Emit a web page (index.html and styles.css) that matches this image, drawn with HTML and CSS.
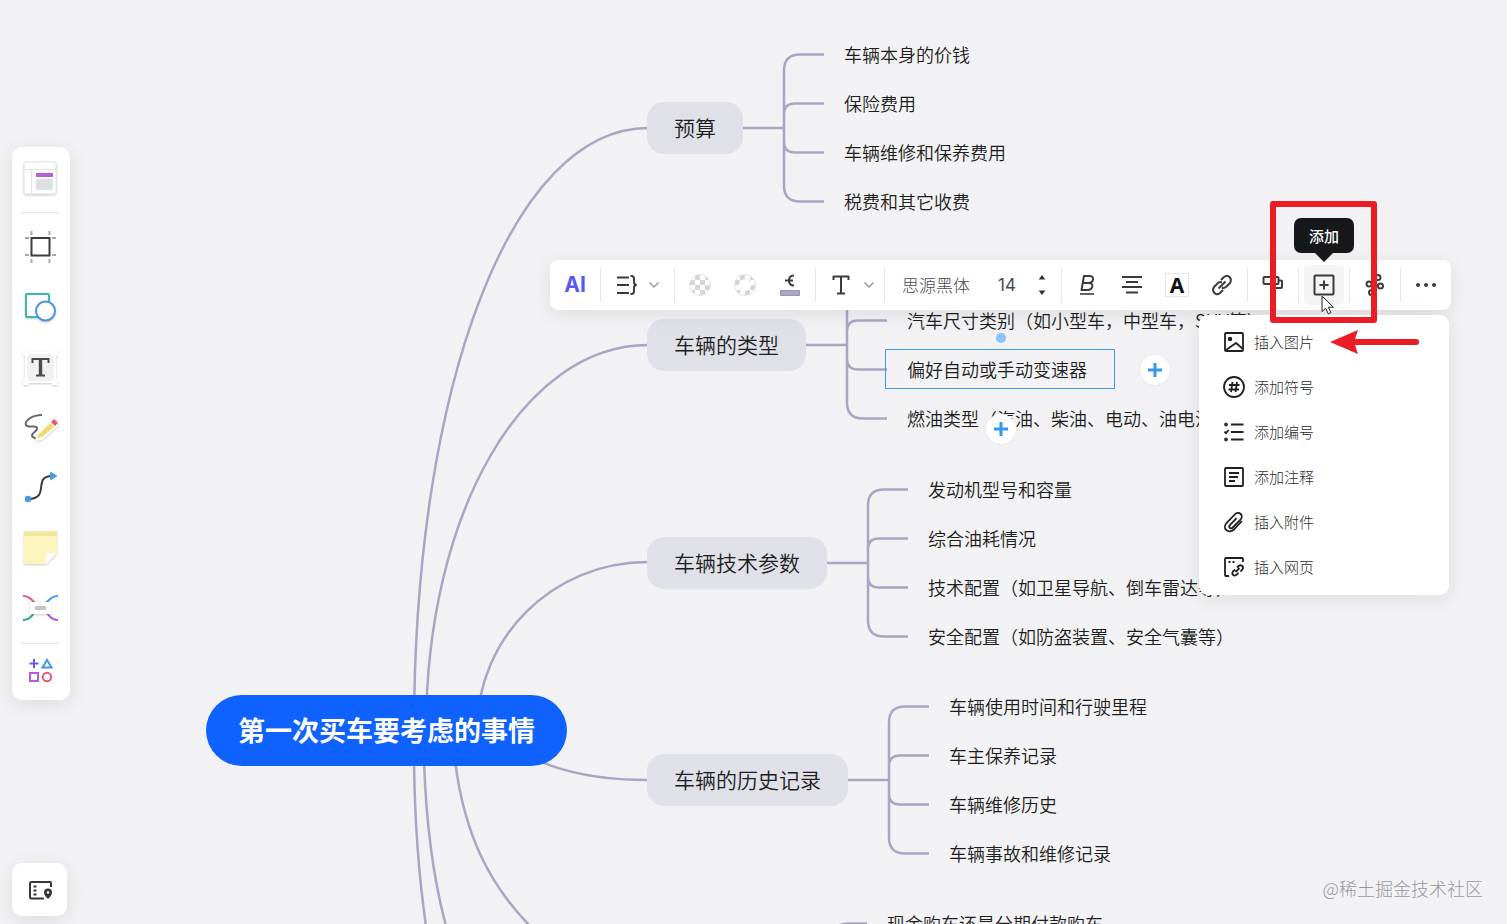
FILE: index.html
```html
<!DOCTYPE html>
<html lang="zh-CN">
<head>
<meta charset="utf-8">
<title>第一次买车要考虑的事情</title>
<meta name="viewport" content="width=device-width, initial-scale=1">
<link rel="stylesheet" href="styles.css">
</head>
<body>
<svg class="defs" aria-hidden="true">
  <defs>
    <symbol id="bracket4" viewBox="0 0 101 196">
      <path d="M0 98H41M81 24.500H57Q41 24.500 41 40.500V155.500Q41 171.500 57 171.500H81M41 86V84Q41 73.500 52 73.500H81M41 110V112Q41 122.500 52 122.500H81"/>
    </symbol>
    <symbol id="chevron" viewBox="0 0 16 16"><path d="M3.500 5.500 8 10l4.500-4.500"/></symbol>
    <symbol id="plus" viewBox="0 0 16 16"><path d="M8 1v14M1 8h14"/></symbol>
  </defs>
</svg>

<main class="canvas">
  <svg class="links" aria-hidden="true">
    <path d="M414 731C414 384 512 128 648 128"/>
    <path d="M426 731C426 513 523 345 648 345"/>
    <path d="M477 731C477 638 552 562 648 562"/>
    <path d="M511 731C511 758 572 780 648 780"/>
    <path d="M414 760Q415 850 426 926M424 760Q427 855 446 926M455 760C464 835 490 885 530 926"/>
  </svg>

  <h1 class="root">第一次买车要考虑的事情</h1>

  <section class="branch branch-budget">
    <h2 class="topic">预算</h2>
    <svg class="bracket" aria-hidden="true"><use href="#bracket4"/></svg>
    <ul class="leaves">
      <li>车辆本身的价钱</li><li>保险费用</li><li>车辆维修和保养费用</li><li>税费和其它收费</li>
    </ul>
  </section>

  <section class="branch branch-type">
    <h2 class="topic">车辆的类型</h2>
    <svg class="bracket" aria-hidden="true"><use href="#bracket4"/></svg>
    <ul class="leaves leaves-offset">
      <li>汽车尺寸类别（如小型车，中型车，SUV等）</li>
      <li class="selected">偏好自动或手动变速器
        <span class="handle"></span>
        <button class="add add-right" type="button" aria-label="添加子主题"><svg><use href="#plus"/></svg></button>
        <button class="add add-below" type="button" aria-label="添加同级主题"><svg><use href="#plus"/></svg></button>
      </li>
      <li>燃油类型（汽油、柴油、电动、油电混合）</li>
    </ul>
  </section>

  <section class="branch branch-tech">
    <h2 class="topic">车辆技术参数</h2>
    <svg class="bracket" aria-hidden="true"><use href="#bracket4"/></svg>
    <ul class="leaves">
      <li>发动机型号和容量</li><li>综合油耗情况</li><li>技术配置（如卫星导航、倒车雷达等）</li><li>安全配置（如防盗装置、安全气囊等）</li>
    </ul>
  </section>

  <section class="branch branch-history">
    <h2 class="topic">车辆的历史记录</h2>
    <svg class="bracket" aria-hidden="true"><use href="#bracket4"/></svg>
    <ul class="leaves">
      <li>车辆使用时间和行驶里程</li><li>车主保养记录</li><li>车辆维修历史</li><li>车辆事故和维修记录</li>
    </ul>
  </section>

  <section class="branch branch-pay">
    <svg class="stub" viewBox="0 0 49 49" aria-hidden="true"><path d="M0 27Q4 24.500 10 24.500H29"/></svg>
    <ul class="leaves"><li>现金购车还是分期付款购车</li></ul>
  </section>
</main>

<nav class="sidebar" aria-label="工具">
  <button class="tool tool-first" type="button" aria-label="模板">
    <svg viewBox="0 0 40 40"><g class="soft"><rect x="4" y="3" width="32" height="32" rx="2" fill="#fff" stroke="#e4e4e6"/></g><path d="M4 10.500h32M11.500 11v24" stroke="#e2e2e4" fill="none"/><rect x="16" y="14" width="17" height="4" fill="#b95fdc"/><rect x="16" y="20" width="17" height="11" rx="1" fill="#dfe0e1"/></svg>
  </button>
  <hr>
  <button class="tool" type="button" aria-label="画框">
    <svg viewBox="0 0 40 40"><path d="M11.500 4v4M29.500 4v4M11.500 32v4M29.500 32v4M5 11h4M32 11h4M5 28h4M32 28h4" stroke="#a9a9a9" stroke-width="2" fill="none"/><rect x="11.500" y="11" width="18" height="17.500" fill="#fff" stroke="#3f3c3f" stroke-width="2"/></svg>
  </button>
  <button class="tool" type="button" aria-label="形状">
    <svg viewBox="0 0 40 40"><g class="soft"><rect x="6" y="7" width="23" height="23" rx="1" fill="#fff" stroke="#3cb8ab" stroke-width="2"/><circle cx="25.500" cy="24" r="9.500" fill="#fff" stroke="#4b93df" stroke-width="2"/></g></svg>
  </button>
  <button class="tool" type="button" aria-label="文本">
    <svg viewBox="0 0 40 40"><g class="soft"><rect x="6" y="6" width="29" height="29" fill="#f1f1f2" stroke="#fff" stroke-width="2"/><path d="M3 3h6v6H3zM32 3h6v6h-6zM3 32h6v6H3zM32 32h6v6h-6z" fill="#fff"/></g><path d="M12.500 16v-4h16v4M20.500 12v16M16 28.500h9" stroke="#4d4a4b" stroke-width="2" fill="none"/><path d="M20.500 12v16" stroke="#4d4a4b" stroke-width="3.400"/></svg>
  </button>
  <button class="tool" type="button" aria-label="画笔">
    <svg viewBox="0 0 40 40"><path d="M22 8C12 8 4 14 6 18c2 4 10-1 11 3 1 3-6 5-5 8 1 2 5 3 7 3" stroke="#69676a" stroke-width="2" fill="none"/><g class="soft"><path d="m17 25 16-15 6 4-1 5-16 14-7 1z" fill="#fff"/><path d="m18 28 12-12 4 4-12 10-5 1z" fill="#f0da71"/><path d="m31 15 3-3 4 4-3 3z" fill="#e8585d"/></g></svg>
  </button>
  <button class="tool" type="button" aria-label="连接线">
    <svg viewBox="0 0 40 40"><path d="M8 32C31 32 12 9 32 9" stroke="#3d3a3d" stroke-width="2" fill="none"/><circle cx="8" cy="32" r="3.200" fill="#459aea"/><path d="m31 6 5 3-5 3z" fill="#459aea" stroke="#459aea" stroke-width="2" stroke-linejoin="round"/></svg>
  </button>
  <button class="tool" type="button" aria-label="便签">
    <svg viewBox="0 0 40 40"><g class="soft"><path d="M4 4h33v22L26 37H4z" fill="#fcf4bc"/><path d="M26 37V28q0-2 2-2h9z" fill="#fff"/></g><path d="M4 4h33v5H4z" fill="#f1e7a0"/></svg>
  </button>
  <button class="tool" type="button" aria-label="思维导图">
    <svg viewBox="0 0 40 40" fill="none" stroke-width="2"><path d="M3 9c6 0 8 3 12 7" stroke="#dc5d80"/><path d="M3 33c6 0 8-3 12-8" stroke="#31a790"/><path d="M38 9c-6 0-8 3-12 7" stroke="#4b9ae4"/><path d="M38 33c-6 0-8-3-12-8" stroke="#a75bdc"/><g class="soft"><rect x="10" y="15" width="21" height="12" rx="1" fill="#fff"/></g><rect x="15" y="19" width="11" height="4" fill="#c6c6c6"/></svg>
  </button>
  <hr>
  <button class="tool tool-last" type="button" aria-label="更多">
    <svg viewBox="0 0 40 40" fill="none" stroke-width="2"><path d="M14 9v9M9.500 13.500h9" stroke="#6759e8"/><path d="m27 10 4.500 7.500h-9z" stroke="#4495e5"/><rect x="10" y="23" width="8" height="8" stroke="#b35cd9"/><circle cx="27" cy="27" r="4.200" stroke="#e0567f"/></svg>
  </button>
</nav>

<button class="minimap" type="button" aria-label="导航">
  <svg viewBox="0 0 26 26" fill="none" stroke="#37373b" stroke-width="2"><path d="M17 21.500H4.500q-1.500 0-1.500-1.500V6.500Q3 5 4.500 5h19Q24 5 24 6.500V10"/><path d="M6.500 9.500h3M6.500 13.500h3M6.500 17.500h3"/><path d="M21 11.500a4 4 0 0 1 4 4q0 3-4 6.500-4-3.500-4-6.500a4 4 0 0 1 4-4z" fill="#37373b" stroke="none"/><circle cx="21" cy="15.500" r="1.300" fill="#fff" stroke="none"/></svg>
</button>

<div class="toolbar" role="toolbar" aria-label="主题格式">
  <div class="group"><button class="tb ai" type="button">AI</button></div>
  <div class="group group-layout">
    <button class="tb" type="button" aria-label="布局"><svg viewBox="0 0 24 24"><path d="M3 4.500h12M3 12h12M3 20h12"/><path d="M16.500 3h1q2.500 0 2.500 3v3q0 2.500 2 3-2 .5-2 3v3q0 3-2.500 3h-1"/></svg></button>
    <button class="drop" type="button" aria-label="更多布局"><svg><use href="#chevron"/></svg></button>
  </div>
  <div class="group">
    <button class="tb" type="button" aria-label="填充"><span class="checker"></span></button>
    <button class="tb" type="button" aria-label="边框"><span class="checker checker-ring"></span></button>
    <button class="tb" type="button" aria-label="线条颜色"><svg viewBox="0 0 24 24"><path d="M16 2.500c-4 0-5 2-5 5s1 5 5 5M7 7.500h8"/><rect x="2.500" y="17.500" width="19" height="5" fill="#aaa5c9" stroke="#9993b6" stroke-width="1"/></svg></button>
  </div>
  <div class="group group-text">
    <button class="tb" type="button" aria-label="文字样式"><svg viewBox="0 0 24 24"><path d="M4.500 7V3.500h15V7M12 3.500v16.500M8 20.500h8"/></svg></button>
    <button class="drop" type="button" aria-label="更多文字样式"><svg><use href="#chevron"/></svg></button>
  </div>
  <div class="group group-font">
    <select class="family" aria-label="字体"><option>思源黑体</option></select>
    <input class="size" type="text" value="14" aria-label="字号">
    <div class="stepper">
      <button type="button" aria-label="增大"><svg viewBox="0 0 8 6"><path d="M4 0 8 5.500H0z"/></svg></button>
      <button type="button" aria-label="减小"><svg viewBox="0 0 8 6"><path d="M4 6 8 .5H0z"/></svg></button>
    </div>
  </div>
  <div class="group">
    <button class="tb" type="button" aria-label="粗体"><svg viewBox="0 0 24 24"><path d="M9 3h5.500q4 0 3.500 3.500-.5 3.500-4.500 3.500H7.800h6q4 0 3.500 3.500Q16.500 17 12.500 17H6.500z"/><path d="M5 21h14" stroke-width="1.600"/></svg></button>
    <button class="tb" type="button" aria-label="对齐"><svg viewBox="0 0 24 24"><path d="M2 4h20M6 9h12M2 14h20M6 19.500h12"/></svg></button>
    <button class="tb" type="button" aria-label="文字颜色"><span class="swatch">A</span></button>
    <button class="tb" type="button" aria-label="链接"><svg viewBox="0 0 24 24"><path d="m8.500 15.500 7-7M11 7l3-3q3-2.500 5.500 0T20 10l-4 4q-2 1.500-4 .5M13 17l-3 3q-3 2.500-5.500 0T4 14l4-4q2-1.500 4-.5"/></svg></button>
  </div>
  <div class="group"><button class="tb" type="button" aria-label="关联"><svg viewBox="0 0 24 24"><rect x="2.500" y="4" width="15" height="7" rx="1"/><path d="M18 7.500h2q1 0 1 1V14q0 1-1 1h-5q-1 0-1-1v-3"/></svg></button></div>
  <div class="group">
    <button class="tb active" type="button" aria-describedby="tip"><svg viewBox="0 0 24 24"><rect x="2.500" y="2.500" width="19" height="19" rx="1"/><path d="M12 7.500v9M7.500 12h9"/></svg><span class="tooltip" id="tip">添加</span></button>
  </div>
  <div class="group"><button class="tb" type="button" aria-label="结构"><svg viewBox="0 0 24 24"><circle cx="15" cy="4.500" r="2.500"/><circle cx="6" cy="11" r="2.500"/><circle cx="17.500" cy="13" r="2.500"/><circle cx="8.500" cy="19.500" r="2.500"/><path d="M8.500 12h6"/></svg></button></div>
  <div class="group"><button class="tb" type="button" aria-label="更多"><svg viewBox="0 0 24 24"><g fill="#3b3b3e" stroke="none"><circle cx="4" cy="12" r="2"/><circle cx="12" cy="12" r="2"/><circle cx="20" cy="12" r="2"/></g></svg></button></div>
</div>

<div class="menu" role="menu">
  <button role="menuitem" type="button"><svg viewBox="0 0 24 24"><rect x="3" y="3" width="18" height="18" rx="1"/><path d="m4 20 10-7 7 6"/><circle cx="8" cy="9" r="1.300" fill="#151517"/></svg>插入图片</button>
  <button role="menuitem" type="button"><svg viewBox="0 0 24 24"><circle cx="12" cy="12" r="10"/><path d="m10.500 7-1.500 10M15 7l-1.500 10M7 10h10.500M6.500 14.500H17"/></svg>添加符号</button>
  <button role="menuitem" type="button"><svg viewBox="0 0 24 24"><path d="M9 4.500h12.500M9 12h12.500M9 19.500h12.500M2.500 11.500l1.500 1.800L6.500 10"/><g stroke="none" fill="#333"><circle cx="4" cy="4.500" r="1.900"/><circle cx="4" cy="19.500" r="1.900"/></g></svg>添加编号</button>
  <button role="menuitem" type="button"><svg viewBox="0 0 24 24"><rect x="3" y="3" width="18" height="18" rx="1"/><path d="M7 8h10M7 12h9M7 16h6"/></svg>添加注释</button>
  <button role="menuitem" type="button"><svg viewBox="0 0 24 24"><path d="m20 11-8 8.500c-2.500 2.500-6 2.500-7.800.5-2-2-1.700-5 .5-7.200l8-8.300c2-2 4.500-2 6-.5s1.400 4-.4 5.800l-7.500 7.700c-1 1-2.200 1.200-3 .4s-.7-2 .3-3l6.500-6.700"/></svg>插入附件</button>
  <button role="menuitem" type="button"><svg viewBox="0 0 24 24"><path d="M7 21H4q-1 0-1-1V4q0-1 1-1h16q1 0 1 1v3"/><path d="M6.500 7h2M10.500 7h2"/><path d="m13.500 17 4-4M15 12.500l1.500-1.500q2-1.500 3.700 0t0 3.700l-1.700 2M13 14.500l-2 2q-1.500 1.800 0 3.300t3.500 0l2-2"/></svg>插入网页</button>
</div>

<svg class="callout-arrow" viewBox="0 0 90 26" aria-hidden="true"><path d="M24 13h62" stroke="#ea1d25" stroke-width="6" stroke-linecap="round"/><path d="M0 13 28 1l-4 12 4 12z" fill="#ea1d25"/></svg>
<div class="callout-box"></div>
<svg class="cursor" viewBox="0 0 14 20" aria-hidden="true"><path d="M1 1v15.500l3.700-3.300 2.600 5.600 2.600-1.200-2.500-5.400h5z" fill="#fff" stroke="#222"/></svg>
<p class="watermark">@稀土掘金技术社区</p>
</body>
</html>
```
FILE: styles.css
```css
* { box-sizing: border-box; }

body {
  margin: 0;
  min-height: 100vh;
  overflow: hidden;
  background: #f2f2f5;
  color: #1d1d20;
  font-family: "Noto Sans CJK SC", "Noto Sans", sans-serif;
}

button, select, input {
  margin: 0;
  padding: 0;
  border: 0;
  background: none;
  color: inherit;
  font: inherit;
}

svg { display: block; }
.defs { position: absolute; width: 0; height: 0; }

/* Mind map */
.canvas { position: relative; height: 100vh; overflow: hidden; }

.links {
  position: absolute;
  inset: 0;
  width: 100%;
  height: 100%;
  fill: none;
  stroke: #a9a5c3;
  stroke-width: 2.5;
}

.root {
  position: absolute;
  left: 206px;
  top: 695px;
  margin: 0;
  padding: 0 32px 2px;
  border-radius: 36px;
  background: #1062ff;
  color: #fff;
  font-size: 27px;
  font-weight: 700;
  line-height: 69px;
  white-space: nowrap;
}

.branch { position: absolute; left: 647px; display: flex; align-items: center; }
.branch-budget { top: 30px; }
.branch-type { top: 247px; }
.branch-tech { top: 465px; }
.branch-history { top: 682px; }
.branch-pay { left: 838px; top: 899px; }

.topic {
  margin: 0;
  padding: 0 27px 2px;
  border-radius: 17px;
  background: #e0e0e9;
  font-size: 21px;
  font-weight: 350;
  line-height: 50px;
  white-space: nowrap;
}

.bracket, .stub { flex: none; width: 101px; height: 196px; fill: none; stroke: #a9a5c3; stroke-width: 2.5; }
.stub { width: 49px; height: 49px; }

.leaves { margin: 0; padding: 0; list-style: none; font-size: 18px; font-weight: 350; line-height: 49px; white-space: nowrap; }
.leaves-offset { padding-top: 49px; }

.selected { position: relative; width: 186px; }
.selected::before {
  content: "";
  position: absolute;
  inset: 4px -22px 5px;
  border: 1px solid #3d9be9;
}
.handle {
  position: absolute;
  left: 89px;
  top: -12px;
  width: 10px;
  height: 10px;
  border-radius: 50%;
  background: #87c4f8;
}
.add {
  position: absolute;
  z-index: 1;
  display: grid;
  place-items: center;
  width: 30px;
  height: 30px;
  border-radius: 50%;
  background: #fff;
  box-shadow: 0 0 3px rgba(0, 0, 0, .08);
}
.add svg { width: 16px; height: 16px; stroke: #3598ec; stroke-width: 3; }
.add-right { left: 233px; top: 10px; }
.add-below { left: 79px; top: 69px; }

/* Panels */
.sidebar, .minimap, .toolbar, .menu {
  position: absolute;
  background: #fff;
  box-shadow: 0 4px 20px rgba(0, 0, 0, .09);
}

.sidebar {
  left: 12px;
  top: 147px;
  width: 58px;
  padding: 5px 10px 8px 8px;
  border-radius: 10px;
  display: flex;
  flex-direction: column;
}
.sidebar hr { width: 100%; height: 1px; margin: 6px 0 4px; border: 0; background: #e6e6e8; }
.tool { display: grid; place-items: center; height: 60px; }
.tool svg { width: 40px; height: 40px; }
.tool-first { height: 54px; }
.tool-last { height: 44px; }
.soft { filter: drop-shadow(0 1px 1px rgba(0, 0, 0, .2)); }

.minimap {
  left: 12px;
  bottom: 8px;
  display: grid;
  place-items: center;
  width: 55px;
  height: 53px;
  border-radius: 10px;
}
.minimap svg { width: 26px; height: 26px; }

.toolbar { left: 550px; top: 260px; display: flex; align-items: center; height: 50px; border-radius: 8px; }
.group { display: flex; align-items: center; gap: 5px; height: 50px; padding: 0 5px; }
.group + .group::before { content: ""; width: 1px; height: 34px; margin: 0 0 0 -5px; background: #e7e7e9; }
.group-layout, .group-text { gap: 0; }
.group-layout { padding-right: 12px; }
.group-text { padding-right: 7px; }
.group-layout .tb, .group-text .tb { margin-left: 5px; }

.tb { position: relative; display: grid; place-items: center; width: 40px; height: 40px; border-radius: 5px; }
.tb svg { width: 24px; height: 24px; fill: none; stroke: #3b3b3e; stroke-width: 2; stroke-linejoin: round; }
.ai { color: #5a58f2; font: 700 21px/40px Inter, sans-serif; }
.active { background: #f4f4f5; }
.drop svg { width: 16px; height: 16px; fill: none; stroke: #9a9a9e; stroke-width: 1.5; }

.checker {
  width: 22px;
  height: 22px;
  border: 1px solid #e2e2e2;
  border-radius: 50%;
  background: repeating-conic-gradient(#d6d6d6 0 25%, #fff 0 50%) 0 0 / 10px 10px;
}
.checker-ring { display: grid; place-items: center; }
.checker-ring::after { content: ""; width: 12px; height: 12px; border-radius: 50%; background: #fff; }

.group-font { padding: 0 15px 0 5px; }
.family { width: 74px; margin-left: 12px; appearance: none; color: #4a4a4d; font-size: 17px; line-height: 26px; font-weight: 300; }
.size { width: 30px; margin-left: 17px; color: #4a4a4d; font-family: Inter, sans-serif; font-size: 17px; line-height: 26px; }
.stepper { display: grid; gap: 10px; margin-left: 5px; }
.stepper svg { width: 8px; height: 5px; fill: #333336; }
.swatch {
  width: 24px;
  height: 24px;
  border: 1px solid #e5e5e6;
  color: #111;
  font: 700 21px/22px "Noto Sans", sans-serif;
}

.tooltip {
  position: absolute;
  bottom: 52px;
  left: -10px;
  width: 60px;
  border-radius: 7px;
  background: #16181a;
  color: #fff;
  font-size: 15px;
  font-weight: 500;
  line-height: 35px;
}
.tooltip::after {
  content: "";
  position: absolute;
  left: 21px;
  top: 100%;
  border: 9px solid transparent;
  border-top-color: #16181a;
  border-bottom: 0;
}

.menu { left: 1199px; top: 315px; width: 250px; padding: 4px 0 6px; border-radius: 9px; }
.menu button { display: flex; align-items: center; gap: 8px; width: 100%; height: 45px; padding-left: 23px; color: #2c2c2e; font-size: 15px; font-weight: 300; }
.menu svg { width: 24px; height: 24px; fill: none; stroke: #202022; stroke-width: 1.8; stroke-linejoin: round; }

/* Annotations */
.callout-box { position: absolute; left: 1270px; top: 201px; width: 107px; height: 122px; border: 6px solid #ea1d25; border-radius: 3px; }
.callout-arrow { position: absolute; left: 1330px; top: 329px; width: 90px; height: 26px; }
.cursor { position: absolute; left: 1321px; top: 295px; width: 14px; height: 20px; }
.watermark { position: absolute; right: 24px; bottom: 22px; margin: 0; color: #98989b; font-size: 18px; line-height: 28px; font-weight: 300; }
```
